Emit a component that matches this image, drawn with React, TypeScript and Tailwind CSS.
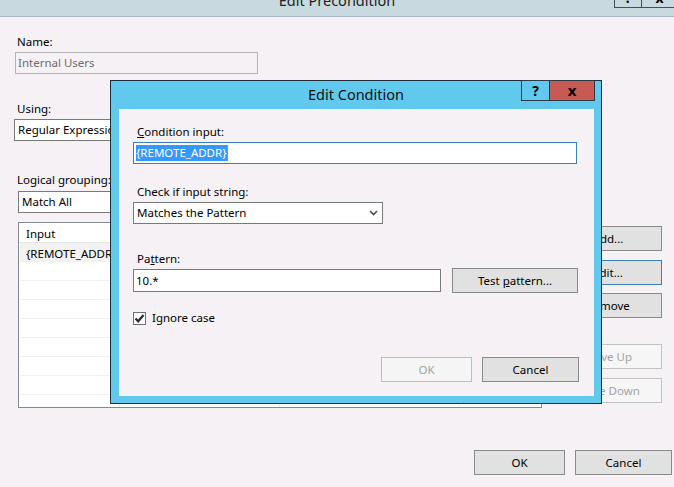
import React from "react";

const listRows = [0, 1, 2, 3, 4, 5, 6, 7, 8];

function Button({ label, className }: { label: React.ReactNode; className: string }) {
  return <div className={`flex items-center justify-center border leading-[16px] ${className}`}>{label}</div>;
}

function Chevron() {
  return (
    <svg width="9" height="6" viewBox="0 0 9 6" className="shrink-0">
      <polyline points="1,1 4.5,4.5 8,1" fill="none" stroke="#4a4a4a" strokeWidth="1.6" />
    </svg>
  );
}

export default function App() {
  return (
    <div className="relative h-[487px] w-[674px] overflow-hidden bg-[#f5f1f5] font-['Noto_Sans',sans-serif] text-[11.5px] text-black">
      {/* parent window title bar, mostly scrolled off the top */}
      <div className="flex h-[17px] overflow-hidden border-b border-[#a9b9c1] bg-[#c8d9e0]">
        <div className="flex-1" />
        <span className="mt-[-10px] text-[14.5px] leading-[20px] text-[#222]">Edit Precondition</span>
        <div className="flex flex-1 justify-end">
          <div className="mt-[-14px] flex h-[22px] w-[28px] items-center justify-center overflow-hidden border border-[#3f4f57] text-[14px] font-bold">?</div>
          <div className="mt-[-14px] mr-[-4px] flex h-[22px] w-[36px] items-center justify-center overflow-hidden border border-l-0 border-[#3f4f57] text-[14px] font-bold">x</div>
        </div>
      </div>

      <div className="flex">
        <div className="flex w-[542px] flex-col">
          <span className="ml-[17px] mt-[17px] leading-[16px]">Name:</span>
          <div className="ml-[15px] mt-[2px] flex h-[22px] w-[243px] items-center border border-[#b3b3b3] pl-[2px] text-[#6d6d6d]">Internal Users</div>

          <span className="ml-[17px] mt-[27px] leading-[16px]">Using:</span>
          <div className="ml-[14px] mt-[2px] flex h-[22px] w-[244px] items-center border border-[#7a7a7a] bg-white pl-[3px]">Regular Expression</div>

          <span className="ml-[17px] mt-[31px] leading-[16px]">Logical grouping:</span>
          <div className="ml-[18px] mt-[3px] flex h-[22px] w-[240px] items-center border border-[#7a7a7a] bg-white pl-[3px]">Match All</div>

          <div className="ml-[18px] mt-[9px] flex h-[186px] w-[524px] flex-col overflow-hidden border border-[#828790] bg-white">
            <div className="flex h-[20px] shrink-0 items-center border-b border-[#e5e5e5] pl-[7px] pt-[3px]">Input</div>
            {listRows.map((r) => (
              <div key={r} className={`mx-[1px] flex h-[19px] shrink-0 border-b border-[#f0f0f0] ${r === 0 ? "bg-[#f2f2f2]" : ""}`}>
                <div className="flex w-[100px] items-center border-r border-[#f0f0f0] pl-[6px] pt-[3px]">{r === 0 ? "{REMOTE_ADDR}" : ""}</div>
                <div className="w-[160px] border-r border-[#f0f0f0]" />
                <div className="w-[180px] border-r border-[#f0f0f0]" />
                <div className="flex-1" />
              </div>
            ))}
          </div>
        </div>

        <div className="ml-[12px] mt-[209px] flex flex-col">
          <Button label="Add..." className="h-[25px] w-[108px] border-[#8a8a8a] bg-[#e1e1e1]" />
          <Button label="Edit..." className="mt-[9px] h-[25px] w-[108px] border-[#3c7fb1] bg-[#e1e1e1]" />
          <Button label="Remove" className="mt-[8px] h-[25px] w-[108px] border-[#8a8a8a] bg-[#e1e1e1]" />
          <Button label="Move Up" className="mt-[26px] h-[25px] w-[108px] border-[#c2c2c2] bg-[#f6f6f6] text-[#a3a3a3]" />
          <Button label="Move Down" className="mt-[9px] h-[25px] w-[108px] border-[#c2c2c2] bg-[#f6f6f6] text-[#a3a3a3]" />
        </div>
      </div>

      <div className="mt-[42px] flex justify-end gap-[10px] pr-[2px]">
        <Button label="OK" className="h-[25px] w-[91px] border-[#8a8a8a] bg-[#e1e1e1]" />
        <Button label="Cancel" className="h-[25px] w-[97px] border-[#8a8a8a] bg-[#e1e1e1]" />
      </div>

      {/* modal dialog on top */}
      <div className="absolute left-[110px] top-[80px] flex h-[324px] w-[492px] flex-col border border-[#1f2d37] bg-[#62c9ee]">
        <div className="relative flex h-[28px] shrink-0 items-center justify-center">
          <span className="mt-[-3px] text-[14.5px] leading-[20px] text-[#111]">Edit Condition</span>
          <div className="absolute right-[6px] top-[-1px] flex">
            <div className="flex h-[21px] w-[28px] items-center justify-center border border-r-0 border-[#2a3a44] text-[14px] font-bold leading-none">?</div>
            <div className="flex h-[21px] w-[46px] items-center justify-center border border-[#2a3a44] bg-[#c75a52] text-[15px] font-bold leading-none">x</div>
          </div>
        </div>

        <div className="mb-[7px] ml-[8px] mr-[7px] flex flex-1 flex-col bg-[#f5f1f5] pl-[14px]">
          <span className="ml-[4px] mt-[15px] leading-[16px]">
            <span className="underline">C</span>ondition input:
          </span>
          <div className="mt-[2px] flex h-[22px] w-[444px] items-center border border-[#3c7fb1] bg-white pl-[2px]">
            <span className="bg-[#3399ff] leading-[16px] text-white">{"{REMOTE_ADDR}"}</span>
            <span className="h-[16px] w-[1px] bg-[#e07b20]" />
          </div>

          <span className="ml-[4px] mt-[20px] leading-[16px]">Check if input string:</span>
          <div className="mt-[2px] flex h-[22px] w-[250px] items-center justify-between border border-[#7a7a7a] bg-white pl-[3px] pr-[4px]">
            <span>Matches the Pattern</span>
            <Chevron />
          </div>

          <span className="ml-[4px] mt-[27px] leading-[16px]">
            Pa<span className="underline">t</span>tern:
          </span>
          <div className="mt-[1px] flex items-center">
            <div className="flex h-[23px] w-[308px] items-center border border-[#7a7a7a] bg-white pl-[2px]">10.*</div>
            <Button
              label={
                <span>
                  Test <span className="underline">p</span>attern...
                </span>
              }
              className="ml-[11px] h-[25px] w-[126px] border-[#8a8a8a] bg-[#e1e1e1]"
            />
          </div>

          <div className="mt-[17px] flex h-[16px] items-center">
            <div className="flex h-[13px] w-[13px] items-center justify-center border border-[#707070] bg-white">
              <svg width="11" height="11" viewBox="0 0 11 11">
                <polyline points="1.5,5.5 4.2,8.3 9.5,2" fill="none" stroke="#2b2b2b" strokeWidth="2.2" />
              </svg>
            </div>
            <span className="ml-[6px] leading-[16px]">Ignore case</span>
          </div>

          <div className="mt-[31px] flex justify-end gap-[10px] pr-[15px]">
            <Button label="OK" className="h-[25px] w-[91px] border-[#bdbdbd] bg-[#f5f5f5] text-[#a3a3a3]" />
            <Button label="Cancel" className="h-[25px] w-[97px] border-[#8a8a8a] bg-[#e1e1e1]" />
          </div>
        </div>
      </div>
    </div>
  );
}
